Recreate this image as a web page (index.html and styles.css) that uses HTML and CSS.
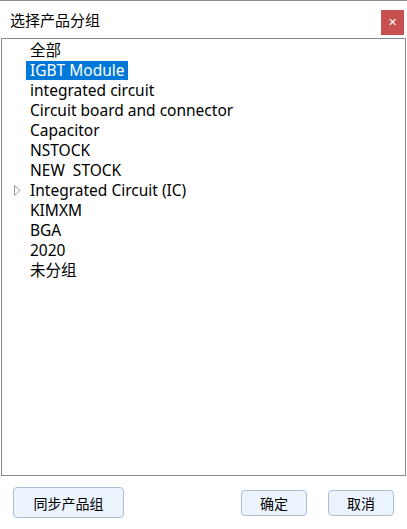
FILE: index.html
```html
<!DOCTYPE html>
<html lang="zh">
<head>
    <meta charset="UTF-8">
    <title>选择产品分组</title>
    <link rel="stylesheet" href="styles.css">
</head>
<body>
    <div class="dialog">
        <div class="titlebar">
            <span class="title">选择产品分组</span>
            <button class="close">&#x2715;</button>
        </div>

        <div class="listbox">
            <div class="row"><span class="label">全部</span></div>
            <div class="row"><span class="label selected">IGBT Module</span></div>
            <div class="row"><span class="label">integrated circuit</span></div>
            <div class="row"><span class="label">Circuit board and connector</span></div>
            <div class="row"><span class="label">Capacitor</span></div>
            <div class="row"><span class="label">NSTOCK</span></div>
            <div class="row"><span class="label">NEW&nbsp; STOCK</span></div>
            <div class="row">
                <svg class="expander" width="7" height="11" viewBox="0 0 7 11">
                    <path d="M0.5 0.5 L6 5.5 L0.5 10.5 Z" fill="none" stroke="#9a9a9a" stroke-width="1"/>
                </svg>
                <span class="label">Integrated Circuit (IC)</span>
            </div>
            <div class="row"><span class="label">KIMXM</span></div>
            <div class="row"><span class="label">BGA</span></div>
            <div class="row"><span class="label">2020</span></div>
            <div class="row"><span class="label">未分组</span></div>
        </div>

        <div class="footer">
            <button class="btn btn-wide">同步产品组</button>
            <div class="spacer"></div>
            <button class="btn">确定</button>
            <button class="btn">取消</button>
        </div>
    </div>
</body>
</html>
```

FILE: styles.css
```css
* {
    margin: 0;
    padding: 0;
    box-sizing: border-box;
}

body {
    font-family: "Noto Sans", "Noto Sans CJK SC", sans-serif;
    color: #000;
    background: #fff;
}

.dialog {
    width: 407px;
    height: 529px;
    display: flex;
    flex-direction: column;
    border-top: 1px solid #8c8c8c;
}

.titlebar {
    height: 37px;
    display: flex;
    align-items: center;
    padding: 0 3px 0 10px;
}

.title {
    flex: 1;
    font-size: 15px;
}

.close {
    width: 23px;
    height: 25px;
    margin-top: 5px;
    border: none;
    background: #c75050;
    color: #fff;
    font-size: 11px;
    font-weight: bold;
    font-family: "DejaVu Sans", sans-serif;
}

.listbox {
    height: 438px;
    margin: 0 1px 0 1px;
    border: 1px solid #868b92;
    padding-top: 1px;
}

.row {
    height: 20px;
    display: flex;
    align-items: center;
    padding-left: 24px;
    position: relative;
    font-size: 15.5px;
}

.label {
    padding: 0 3px 0 4px;
    line-height: 19px;
    white-space: nowrap;
}

.selected {
    background: #0078d7;
    color: #fff;
}

.expander {
    position: absolute;
    left: 12px;
    top: 5px;
}

.footer {
    flex: 1;
    display: flex;
    align-items: center;
    padding: 0 13px;
    gap: 21px;
}

.spacer {
    flex: 1;
}

.btn {
    width: 66px;
    height: 26px;
    border: 1px solid #adbdd6;
    border-radius: 4px;
    background: #ebf4fd;
    font-family: "Noto Sans CJK SC", sans-serif;
    font-size: 14px;
    color: #000;
}

.btn-wide {
    width: 111px;
    height: 31px;
}
```
